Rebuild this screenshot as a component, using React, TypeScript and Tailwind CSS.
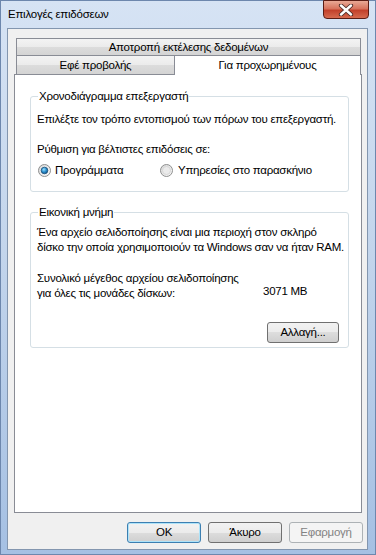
import React from "react";

// Win7 style button gradient
const btn =
    "h-[21px] flex items-center justify-center rounded-[3px] border bg-[linear-gradient(#f2f2f2_0%,#ebebeb_50%,#dddddd_50%,#cfcfcf_100%)]";

const Radio = ({ checked }: { checked?: boolean }) => (
    <svg width="13" height="13" viewBox="0 0 13 13" className="shrink-0">
        <defs>
            <linearGradient id={checked ? "rg1" : "rg0"} x1="0" y1="0" x2="1" y2="1">
                <stop offset="0" stopColor="#d6d6d6" />
                <stop offset="1" stopColor="#fbfbfb" />
            </linearGradient>
            <radialGradient id="dot" cx="0.4" cy="0.35" r="0.7">
                <stop offset="0" stopColor="#9fe2ff" />
                <stop offset="0.5" stopColor="#2f93d0" />
                <stop offset="1" stopColor="#0b4e86" />
            </radialGradient>
        </defs>
        <circle cx="6.5" cy="6.5" r="6" fill={`url(#${checked ? "rg1" : "rg0"})`} stroke="#8e8f8f" />
        {checked ? (
            <circle cx="6.5" cy="6.5" r="3.3" fill="url(#dot)" stroke="#1b4f78" strokeWidth="0.8" />
        ) : (
            <circle cx="6.5" cy="6.5" r="4" fill="#ebebeb" stroke="#d0d0d0" strokeWidth="0.8" />
        )}
    </svg>
);

const App = (): JSX.Element => {
    return (
        <div className="w-[376px] h-[555px] flex flex-col bg-[linear-gradient(180deg,#d6e3f4_0%,#c3d5ec_45%,#a5c0e3_100%)] border border-[#6d87ad] font-['Liberation_Sans',Arial,sans-serif] text-[11.5px] tracking-[-0.25px] leading-[15px] text-black whitespace-nowrap">
            {/* title bar */}
            <div className="h-[27px] flex items-start">
                <div className="pl-[7px] pt-[6px]">Επιλογές επιδόσεων</div>
                <div className="ml-auto mr-[6px] mt-[-1px] w-[46px] h-[19px] rounded-b-[4px] border border-[#5a1d15] bg-[linear-gradient(#e9a996_0%,#d7735d_45%,#c2412b_55%,#d66a4f_100%)] flex items-center justify-center">
                    <svg width="16" height="12" viewBox="0 0 16 12">
                        <path d="M3 1.5 L13 10.5 M13 1.5 L3 10.5" stroke="#4a2a26" strokeWidth="4.2" strokeLinecap="round" />
                        <path d="M3 1.5 L13 10.5 M13 1.5 L3 10.5" stroke="#ffffff" strokeWidth="2.4" strokeLinecap="round" />
                    </svg>
                </div>
            </div>

            {/* client area */}
            <div className="flex-1 ml-[6px] mr-[7px] mb-[4px] border border-[#8396af] bg-[#f0f0f0] flex flex-col pl-[6px] pr-[5px] pt-[9px] pb-[6px]">
                {/* tabs */}
                <div className="ml-[2px] mr-[1px] flex flex-col">
                    <div className="h-[17px] border-x border-t border-[#898c95] bg-[linear-gradient(#f3f3f3_0%,#ebebeb_50%,#dcdcdc_50%,#d4d4d4_100%)] flex items-center justify-center">
                        Αποτροπή εκτέλεσης δεδομένων
                    </div>
                    <div className="flex h-[19px]">
                        <div className="w-[158px] border-l border-t border-[#898c95] bg-[linear-gradient(#f3f3f3_0%,#ebebeb_50%,#dcdcdc_50%,#d4d4d4_100%)] flex items-center justify-center pt-[1px]">
                            Εφέ προβολής
                        </div>
                        <div className="flex-1 h-[20px] relative z-10 border-x border-t border-[#898c95] bg-white flex items-center justify-center pb-[1px]">
                            Για προχωρημένους
                        </div>
                    </div>
                </div>

                {/* panel */}
                <div className="flex-1 border border-[#898c95] bg-white pl-[15px] pr-[12px] pt-[14px] flex flex-col">
                    <fieldset className="min-w-0 border border-[#d5dfe5] rounded-[3px] px-[6px] pb-[13px]">
                        <legend className="ml-[1px] px-[1px] leading-[15px]">Χρονοδιάγραμμα επεξεργαστή</legend>
                        <div className="pt-[8px]">Επιλέξτε τον τρόπο εντοπισμού των πόρων του επεξεργαστή.</div>
                        <div className="mt-[15px]">Ρύθμιση για βέλτιστες επιδόσεις σε:</div>
                        <div className="mt-[6px] flex items-center">
                            <div className="w-[123px] flex items-center gap-[4px] pl-[1px]">
                                <Radio checked />
                                <span>Προγράμματα</span>
                            </div>
                            <div className="flex items-center gap-[5px]">
                                <Radio />
                                <span>Υπηρεσίες στο παρασκήνιο</span>
                            </div>
                        </div>
                    </fieldset>

                    <fieldset className="min-w-0 mt-[13px] border border-[#d5dfe5] rounded-[3px] px-[6px] pb-[4px]">
                        <legend className="ml-[1px] px-[1px] leading-[15px]">Εικονική μνήμη</legend>
                        <div className="pt-[5px]">
                            Ένα αρχείο σελιδοποίησης είναι μια περιοχή στον σκληρό
                            <br />
                            δίσκο την οποία χρησιμοποιούν τα Windows σαν να ήταν RAM.
                        </div>
                        <div className="mt-[16px] flex items-end">
                            <div className="w-[226px]">
                                Συνολικό μέγεθος αρχείου σελιδοποίησης
                                <br />
                                για όλες τις μονάδες δίσκων:
                            </div>
                            <div className="mb-[2px]">3071 MB</div>
                        </div>
                        <div className="mt-[21px] flex justify-end pr-[3px]">
                            <div className={`${btn} w-[72px] border-[#707070]`}>Αλλαγή...</div>
                        </div>
                    </fieldset>
                </div>

                {/* dialog buttons */}
                <div className="mt-[9px] flex justify-end gap-[7px] mr-[-1px]">
                    <div className={`${btn} w-[74px] border-[#3c7fb1] shadow-[inset_0_0_0_1px_#aee3f9]`}>OK</div>
                    <div className={`${btn} w-[74px] border-[#707070]`}>Άκυρο</div>
                    <div className="h-[21px] w-[74px] flex items-center justify-center rounded-[3px] border border-[#adb2b5] bg-[#f4f4f4] text-[#838383]">
                        Εφαρμογή
                    </div>
                </div>
            </div>
        </div>
    );
};

export default App;
